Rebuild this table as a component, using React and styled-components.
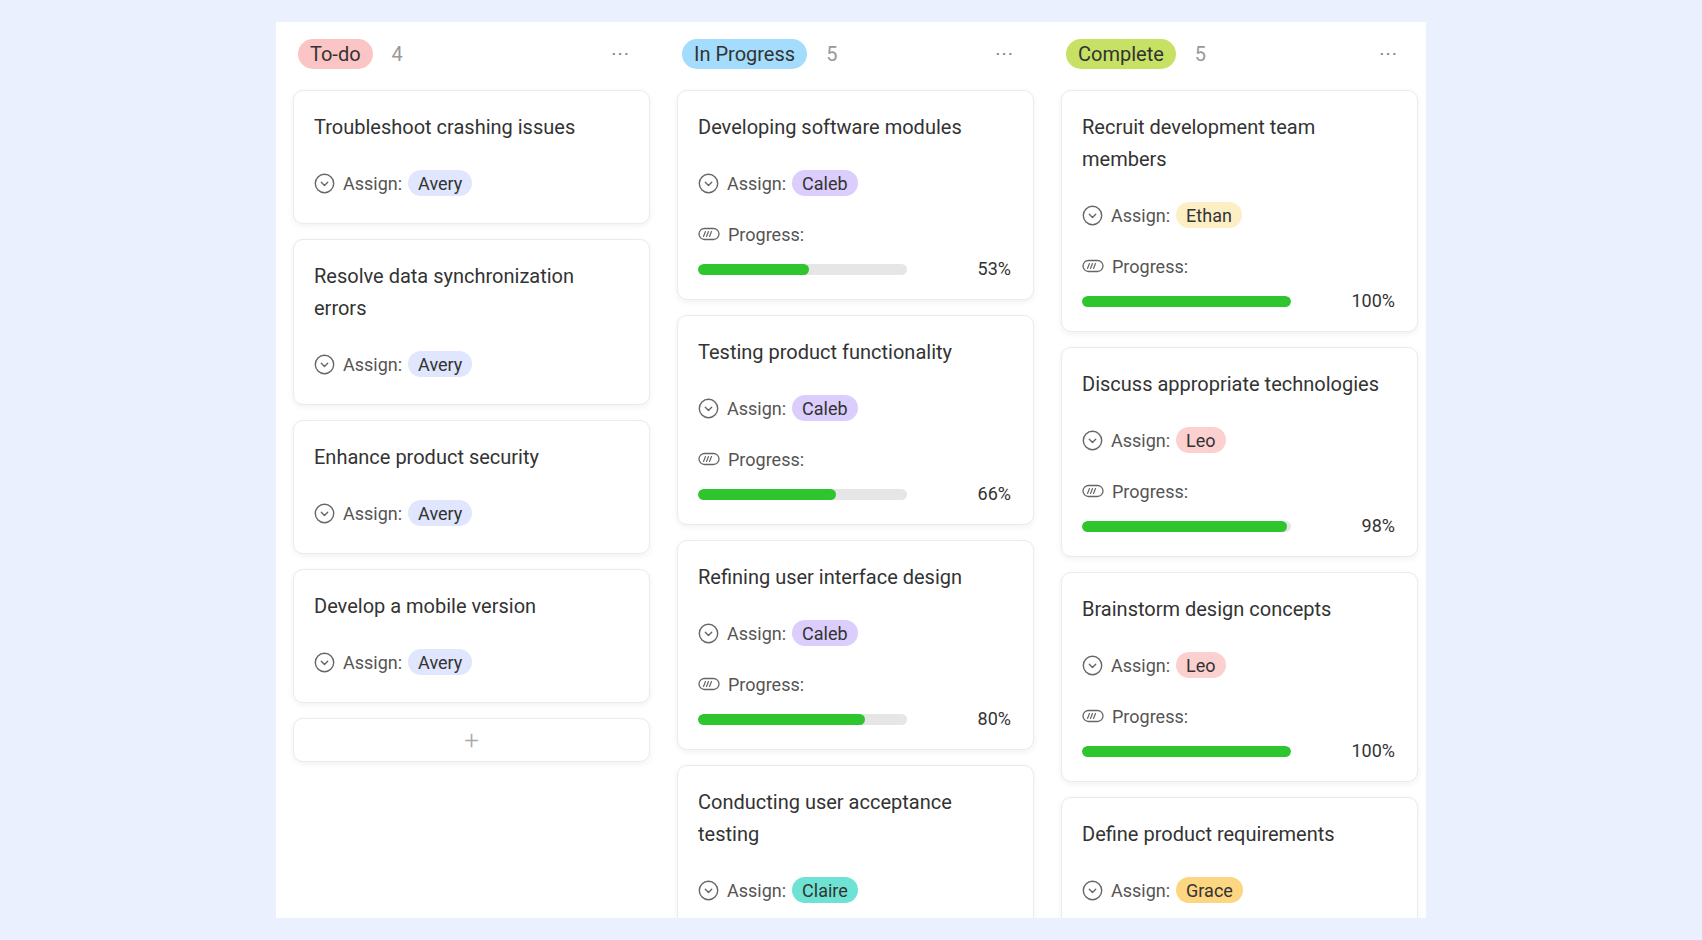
import styled, { createGlobalStyle } from 'styled-components'

const GlobalStyle = createGlobalStyle`
  html, body {
    margin: 0;
    padding: 0;
    background: #eaf0fd;
  }
  body {
    font-family: Roboto, "Liberation Sans", Arial, sans-serif;
    color: #333;
  }
`

const chipColors = {
  Avery: '#dfe6fd',
  Caleb: '#dccefc',
  Claire: '#6fe3d3',
  Ethan: '#fcefc6',
  Leo: '#fdd0d0',
  Grace: '#fcd680',
}

// only the cards that fit in the board are listed, count is the full total
const columns = [
  {
    title: 'To-do',
    color: '#fcc5c5',
    count: 4,
    canAdd: true,
    tasks: [
      { name: 'Troubleshoot crashing issues', assign: 'Avery' },
      { name: 'Resolve data synchronization errors', assign: 'Avery' },
      { name: 'Enhance product security', assign: 'Avery' },
      { name: 'Develop a mobile version', assign: 'Avery' },
    ],
  },
  {
    title: 'In Progress',
    color: '#a3dcfc',
    count: 5,
    tasks: [
      { name: 'Developing software modules', assign: 'Caleb', progress: 53 },
      { name: 'Testing product functionality', assign: 'Caleb', progress: 66 },
      { name: 'Refining user interface design', assign: 'Caleb', progress: 80 },
      { name: 'Conducting user acceptance testing', assign: 'Claire' },
    ],
  },
  {
    title: 'Complete',
    color: '#c6e163',
    count: 5,
    tasks: [
      { name: 'Recruit development team members', assign: 'Ethan', progress: 100 },
      { name: 'Discuss appropriate technologies', assign: 'Leo', progress: 98 },
      { name: 'Brainstorm design concepts', assign: 'Leo', progress: 100 },
      { name: 'Define product requirements', assign: 'Grace' },
    ],
  },
]

function AssignIcon() {
  return (
    <svg width="21" height="21" viewBox="0 0 21 21" fill="none">
      <circle cx="10.5" cy="10.5" r="9.2" stroke="#666" strokeWidth="1.4" />
      <polyline points="7.3,9.2 10.5,12.4 13.7,9.2" stroke="#666" strokeWidth="1.4" strokeLinecap="round" strokeLinejoin="round" />
    </svg>
  )
}

function ProgressIcon() {
  return (
    <svg width="22" height="14" viewBox="0 0 22 14" fill="none">
      <rect x="1" y="1.5" width="20" height="11" rx="5.5" stroke="#666" strokeWidth="1.3" />
      <line x1="5.5" y1="9.5" x2="7.5" y2="4.5" stroke="#666" strokeWidth="1.2" strokeLinecap="round" />
      <line x1="8.5" y1="9.5" x2="10.5" y2="4.5" stroke="#666" strokeWidth="1.2" strokeLinecap="round" />
      <line x1="11.5" y1="9.5" x2="13.5" y2="4.5" stroke="#666" strokeWidth="1.2" strokeLinecap="round" />
    </svg>
  )
}

function TaskCard({ task }) {
  return (
    <Card>
      <Title>{task.name}</Title>
      <InfoRow>
        <AssignIcon />
        <Label>Assign:</Label>
        <Chip $bg={chipColors[task.assign]}>{task.assign}</Chip>
      </InfoRow>
      {task.progress !== undefined && (
        <>
          <ProgressRow>
            <ProgressIcon />
            <Label>Progress:</Label>
          </ProgressRow>
          <BarRow>
            <Track>
              <Fill style={{ width: `${task.progress}%` }} />
            </Track>
            <Percent>{task.progress}%</Percent>
          </BarRow>
        </>
      )}
    </Card>
  )
}

export default function App() {
  return (
    <>
      <GlobalStyle />
      <Page>
        <Board>
          {columns.map((col) => (
            <Column key={col.title}>
              <ColumnHeader>
                <StatusPill $bg={col.color}>{col.title}</StatusPill>
                <Count>{col.count}</Count>
                <More>···</More>
              </ColumnHeader>
              <CardList>
                {col.tasks.map((task) => (
                  <TaskCard key={task.name} task={task} />
                ))}
                {col.canAdd && <AddButton type="button">+</AddButton>}
              </CardList>
            </Column>
          ))}
        </Board>
      </Page>
    </>
  )
}

const Page = styled.div`
  padding: 22px 0;
`

const Board = styled.div`
  width: 1150px;
  height: 896px;
  margin: 0 auto;
  background: #fff;
  overflow: hidden;
  box-sizing: border-box;
  padding: 0 8px 0 17px;
  display: grid;
  grid-template-columns: repeat(3, 357px);
  column-gap: 27px;
  align-items: start;
`

const Column = styled.div`
  display: flex;
  flex-direction: column;
`

const ColumnHeader = styled.div`
  display: flex;
  align-items: center;
  height: 30px;
  margin: 17px 0 21px;
  padding: 0 20px 0 5px;
`

const StatusPill = styled.span`
  display: inline-flex;
  align-items: center;
  height: 30px;
  padding: 0 12px;
  border-radius: 15px;
  background: ${(p) => p.$bg};
  font-size: 20px;
  color: #333;
`

const Count = styled.span`
  margin-left: 19px;
  font-size: 20px;
  color: #999;
`

const More = styled.span`
  margin-left: auto;
  font-size: 20px;
  letter-spacing: 1px;
  color: #888;
`

const CardList = styled.div`
  display: flex;
  flex-direction: column;
  gap: 15px;
`

const Card = styled.div`
  box-sizing: border-box;
  padding: 20px 20px 24px;
  background: #fff;
  border: 1px solid #ebebeb;
  border-radius: 10px;
  box-shadow: 0 2px 6px rgba(0, 0, 0, 0.06);
  display: flex;
  flex-direction: column;
`

const Title = styled.div`
  font-size: 20px;
  line-height: 32px;
  color: #333;
`

const InfoRow = styled.div`
  display: flex;
  align-items: center;
  height: 32px;
  margin-top: 24px;
`

const ProgressRow = styled(InfoRow)`
  margin-top: 19px;
`

const Label = styled.span`
  margin-left: 8px;
  font-size: 18px;
  color: #555;
`

const Chip = styled.span`
  display: inline-flex;
  align-items: center;
  height: 26px;
  margin-left: 6px;
  padding: 0 10px;
  border-radius: 13px;
  background: ${(p) => p.$bg};
  font-size: 18px;
  color: #333;
`

const BarRow = styled.div`
  display: grid;
  grid-template-columns: 209px 1fr;
  align-items: center;
  height: 12px;
  margin-top: 13px;
`

const Track = styled.div`
  height: 11px;
  border-radius: 6px;
  background: #e6e6e6;
  overflow: hidden;
`

const Fill = styled.div`
  height: 100%;
  border-radius: 6px;
  background: #2fc52f;
`

const Percent = styled.span`
  padding-right: 2px;
  text-align: right;
  font-size: 18px;
  line-height: 12px;
  color: #333;
`

const AddButton = styled.button`
  height: 44px;
  background: #fff;
  border: 1px solid #ebebeb;
  border-radius: 10px;
  box-shadow: 0 2px 6px rgba(0, 0, 0, 0.06);
  font-family: inherit;
  font-size: 26px;
  font-weight: 300;
  color: #aaa;
  cursor: pointer;
`
